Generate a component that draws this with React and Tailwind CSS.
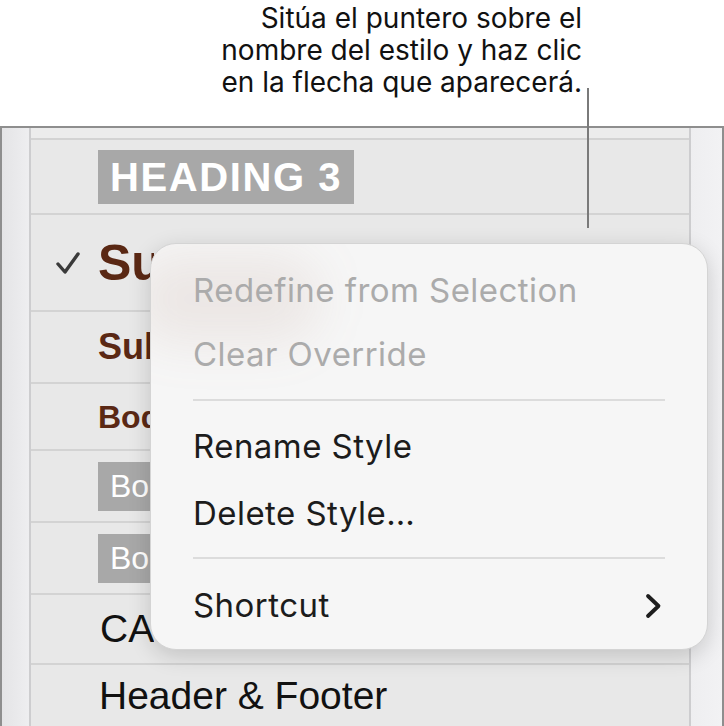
const SANS = "font-['Liberation_Sans',Arial,sans-serif]";

// ── Style list rows ──────────────────────────────────
const Row = ({ h, children, last, check }) => (
  <div className={`${h} relative flex items-center pl-[67px] shrink-0 ${last ? '' : 'border-b-2 border-[#d3d3d3]'}`}>
    {check && (
      <svg width="26" height="26" viewBox="0 0 26 26" className="absolute left-[24px] top-[35px]">
        <path d="M3 14 L10 22 L23 4" fill="none" stroke="#3a3a3a" strokeWidth="3.4" strokeLinecap="round" strokeLinejoin="round" />
      </svg>
    )}
    {/* the menu sits over the rest of each style name */}
    <div className="w-[56px] overflow-hidden whitespace-nowrap">
      {children}
    </div>
  </div>
);

const MenuItem = ({ children, disabled, h = 'h-16' }) => (
  <div className={`${h} flex items-center px-[42px] text-[33px] tracking-[0.45px] ${disabled ? 'text-[#ababab]' : 'text-[#1c1c1c]'}`}>
    {children}
  </div>
);

const Separator = ({ h }) => (
  <div className={`${h} flex items-center px-[42px]`}>
    <div className="h-[2px] w-full bg-[#dcdcdc]" />
  </div>
);

export default function App() {
  return (
    <div className={`w-[724px] h-[726px] bg-white relative overflow-hidden ${SANS}`}>

      {/* ── Callout text ─────────────────────────────── */}
      <div className="h-[126px] flex justify-end pr-[142px] pt-[2px]">
        <p className="font-['Inter',sans-serif] text-[28px] leading-[32px] text-right text-[#111]">
          Sitúa el puntero sobre el<br />
          nombre del estilo y haz clic<br />
          en la flecha que aparecerá.
        </p>
      </div>

      {/* leader line */}
      <div className="absolute left-[587px] top-[88px] w-[2px] h-[140px] bg-[#7a7a7a] z-10" />

      {/* ── Styles panel ─────────────────────────────── */}
      <div className="flex h-[600px] border-t-2 border-[#8e8e8e]">
        <div className="w-[31px] shrink-0 border-l-2 border-[#8e8e8e] border-r-2 border-r-[#cdcdcf] bg-gradient-to-r from-[#e4e4e6] to-[#eeeef0]" />

        <div className="flex-1 flex flex-col bg-[#e8e8e8]">
          <div className="h-[12px] shrink-0 border-b-2 border-[#d3d3d3] bg-[#ececec]" />

          <div className="h-[75px] shrink-0 flex items-center pl-[67px] border-b-2 border-[#d3d3d3]">
            <span className="bg-[#a8a8a8] text-white font-black text-[40px] leading-[54px] px-[12px] tracking-[1.6px]">
              HEADING 3
            </span>
          </div>

          <Row h="h-[97px]" check>
            <span className="text-[#5a2814] font-bold text-[50px] leading-[60px]">Subtitle</span>
          </Row>

          <Row h="h-[72px]">
            <span className="text-[#5a2814] font-bold text-[36px] leading-[44px]">Subheading</span>
          </Row>

          <Row h="h-[67px]">
            <span className="text-[#5a2814] font-bold text-[32px] leading-[40px]">Body Bold</span>
          </Row>

          <Row h="h-[72px]">
            <span className="inline-block bg-[#a8a8a8] text-white text-[32px] leading-[49px] pl-[12px] pr-[40px]">Body Label</span>
          </Row>

          <Row h="h-[72px]">
            <span className="inline-block bg-[#a8a8a8] text-white text-[32px] leading-[49px] pl-[12px] pr-[40px]">Body Label</span>
          </Row>

          <Row h="h-[70px]">
            <span className="text-[#111] text-[39px] leading-[46px] pl-[2px]">CAPTION</span>
          </Row>

          <div className="flex-1 flex items-center pl-[68px]">
            <span className="text-[#111] text-[39px] leading-none">Header &amp; Footer</span>
          </div>
        </div>

        <div className="w-[35px] shrink-0 border-l-2 border-[#cdcdcf] border-r-2 border-r-[#8e8e8e] bg-gradient-to-r from-[#eeeef0] to-[#f2f2f4]" />
      </div>

      {/* ── Context menu ─────────────────────────────── */}
      <div className="absolute left-[150px] top-[243px] w-[558px] h-[407px] rounded-[26px] bg-[#f6f6f6] border border-[#d4d4d4] shadow-[0_6px_22px_rgba(0,0,0,0.16)] pt-[15px] font-['Inter',sans-serif] z-20 overflow-hidden">
        {/* blurred reflection of the selected style behind the menu */}
        <div className="absolute left-[-20px] top-[10px] w-[190px] h-[90px] rounded-full bg-[#9a6a55]/10 blur-xl" />

        <div className="relative">
          <MenuItem disabled>Redefine from Selection</MenuItem>
          <MenuItem disabled>Clear Override</MenuItem>
          <Separator h="h-[26px]" />
          <MenuItem h="h-[67px]">Rename Style</MenuItem>
          <MenuItem h="h-[67px]">Delete Style…</MenuItem>
          <Separator h="h-[22px]" />
          <div className="h-[74px] flex items-center justify-between pl-[42px] pr-[45px] text-[33px] tracking-[0.45px] text-[#1c1c1c]">
            Shortcut
            <svg width="17" height="26" viewBox="0 0 17 26">
              <path d="M3 3 L13.5 13 L3 23" fill="none" stroke="#1e1e1e" strokeWidth="3.8" strokeLinecap="round" strokeLinejoin="round" />
            </svg>
          </div>
        </div>
      </div>
    </div>
  );
}
